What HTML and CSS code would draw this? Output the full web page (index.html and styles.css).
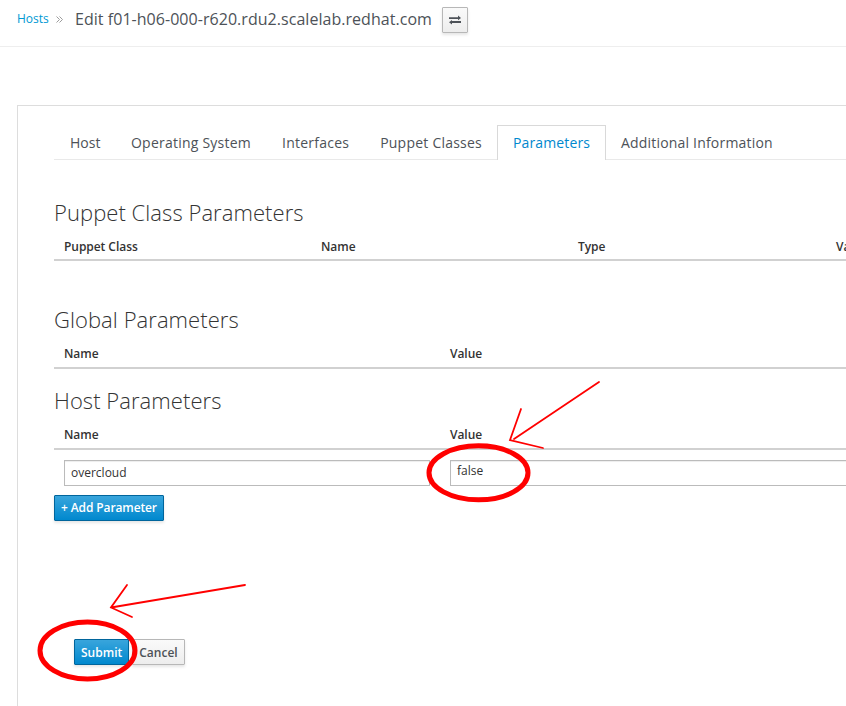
FILE: index.html
```
<!DOCTYPE html>
<html lang="en">
<head>
<meta charset="utf-8">
<title>Edit host</title>
<link rel="stylesheet" href="styles.css">
</head>
<body>
<header class="breadcrumb">
  <a class="crumb">Hosts</a>
  <svg class="chevrons" width="7" height="7" viewBox="0 0 7 7"><path d="M.5.5l3 3-3 3M3.5.5l3 3-3 3"/></svg>
  <h1 class="title">Edit f01-h06-000-r620.rdu2.scalelab.redhat.com</h1>
  <button class="btn swap" aria-label="Switch host"><svg width="12" height="10" viewBox="0 0 12 10"><path d="M0 2.200h9V.5l3 2.500-3 2.200V4H0zM12 6H3V4.900L0 7.300l3 2.300V8h9z"/></svg></button>
</header>
<main class="panel">
  <nav class="tabs">
    <a class="tab first">Host</a>
    <a class="tab">Operating System</a>
    <a class="tab">Interfaces</a>
    <a class="tab">Puppet Classes</a>
    <a class="tab active">Parameters</a>
    <a class="tab last">Additional Information</a>
  </nav>
  <section class="section puppet">
    <h2>Puppet Class Parameters</h2>
    <div class="thead four"><span>Puppet Class</span><span>Name</span><span>Type</span><span>Value</span></div>
  </section>
  <section class="section global">
    <h2>Global Parameters</h2>
    <div class="thead two"><span>Name</span><span>Value</span></div>
  </section>
  <section class="section host">
    <h2>Host Parameters</h2>
    <div class="thead two"><span>Name</span><span>Value</span></div>
    <div class="fields"><div class="field">overcloud</div><div class="field value">false</div></div>
    <button class="btn primary add">+ Add Parameter</button>
  </section>
  <footer class="actions">
    <button class="btn primary">Submit</button>
    <button class="btn">Cancel</button>
  </footer>
</main>
<svg class="marks" width="846" height="706" viewBox="0 0 846 706">
  <g class="ring"><ellipse cx="478.500" cy="472.800" rx="49.500" ry="27"/><ellipse cx="87.500" cy="650.500" rx="47.500" ry="28.500"/></g>
  <g class="arrow"><path d="M599 382L514 439M521 409L510 440L543 448"/><path d="M245 585L111 607.500M127 585L111 607.500L132 617"/></g>
</svg>
</body>
</html>
```

FILE: styles.css
```
* { box-sizing: border-box; }
body {
  margin: 0;
  height: 706px;
  overflow: hidden;
  position: relative;
  background: #fff;
  color: #333;
  font: 12px/20px "Open Sans", sans-serif;
}
.breadcrumb {
  display: flex;
  align-items: center;
  height: 47px;
  padding: 0 0 7px 17px;
  border-bottom: 1px solid #eee;
}
.crumb { color: #0099d3; width: 39px; padding-bottom: 2px; }
.chevrons { width: 7px; margin-right: 12px; fill: none; stroke: #9c9c9c; }
.title { margin: 0 10px 0 0; padding-bottom: 2px; width: 357px; font-size: 16px; font-weight: 400; letter-spacing: .04px; color: #4d5258; white-space: nowrap; }
.btn {
  height: 26px;
  padding: 1px 6px 0;
  border: 1px solid #b7b7b7;
  border-radius: 1px;
  background: linear-gradient(#fafafa, #ededed);
  box-shadow: 0 2px 3px rgba(3, 3, 3, .1);
  color: #4d5258;
  font: 600 12px/22px "Open Sans", sans-serif;
  white-space: nowrap;
}
.btn.primary { border-color: #00659c; background: linear-gradient(#39a5dc, #0088ce); color: #fff; }
.btn.add { width: 110px; padding-top: 0; letter-spacing: -.12px; }
.btn.swap { display: flex; align-items: center; justify-content: center; width: 26px; padding-top: 0; }
.swap svg { fill: #4d5258; }
.panel {
  width: 1100px;
  height: 700px;
  margin: 58px 0 0 17px;
  padding: 19px 36px;
  border: 1px solid #ddd;
}
.tabs { display: flex; height: 35px; border-bottom: 1px solid #e9e9e9; }
.tab {
  height: 35px;
  padding: 7px 15px 0;
  border: 1px solid transparent;
  border-bottom: 0;
  font-size: 14px;
  letter-spacing: .23px;
  color: #4d5258;
  white-space: nowrap;
  margin-right: -1px;
}
.tab.first { width: 62px; letter-spacing: 0; }
.tab.active { width: 109px; letter-spacing: .13px; border-color: #d9d9d9; background: #fff; color: #0088ce; }
.tab.last { letter-spacing: .19px; }
h2 { margin: 0; font-size: 22px; line-height: 24px; font-weight: 300; letter-spacing: .06px; color: #333; }
.puppet { margin-top: 40px; height: 107px; }
.global { height: 81px; }
.host { height: 251px; }
.thead { display: grid; height: 27px; margin-top: 10px; padding-top: 3px; border-bottom: 2px solid #d1d1d1; font-weight: 600; letter-spacing: -.05px; }
.four { grid-template-columns: 257px 257px 258px 257px; }
.two { grid-template-columns: repeat(3, 386px); }
.thead span { padding-left: 10px; }
.global .thead, .host .thead { height: 28px; }
.fields { display: flex; gap: 20px; padding: 10px 0 9px 10px; }
.field { flex: none; width: 366px; height: 26px; padding: 2px 6px; border: 1px solid #bbb; box-shadow: inset 0 1px 1px rgba(3, 3, 3, .075); }
.field.value { width: 560px; padding-top: 0; }
.actions { display: flex; gap: 3px; padding-left: 20px; }
.marks { position: absolute; left: 0; top: 0; fill: none; stroke: #f00; }
.ring { stroke-width: 5; }
.arrow { stroke-width: 1.800; stroke-linecap: round; }
```
